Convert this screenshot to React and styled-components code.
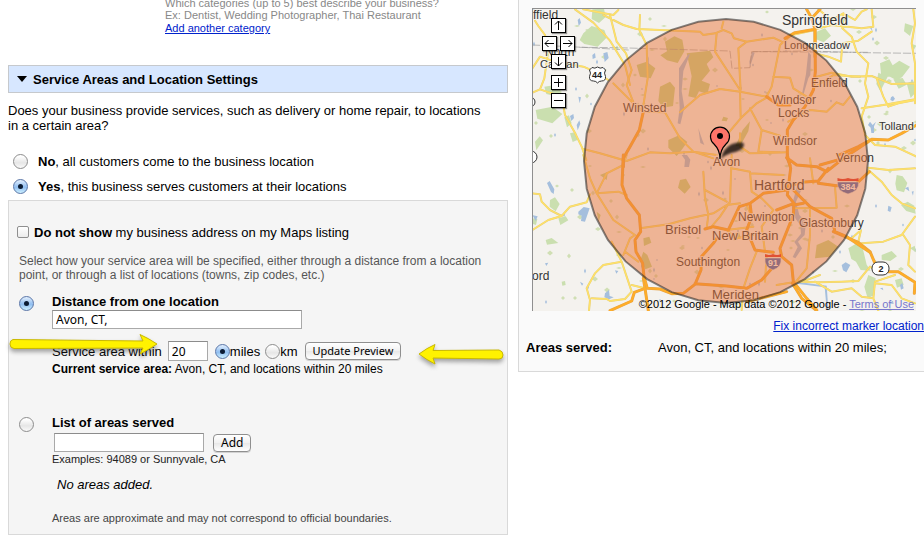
import React from "react";
import styled, { createGlobalStyle, css } from "styled-components";

const GlobalStyle = createGlobalStyle`
  * { box-sizing: border-box; }
  body {
    margin: 0;
    background: #fff;
    color: #000;
    font: 13px/15px "Liberation Sans", Arial, Helvetica, sans-serif;
    overflow: hidden;
  }
  a { color: #0022cc; }
  p, h2 { margin: 0; }
`;

const Page = styled.main`
  display: grid;
  grid-template-columns: minmax(0, 500fr) minmax(0, 406fr);
  gap: 10px;
  padding-left: 8px;
  align-items: start;
`;

const Form = styled.form``;

const CategoryHint = styled.div`
  margin: -3px 0 0 157px;
  padding-bottom: 29px;
  font-size: 11px;
  line-height: 12px;
  color: #888;
  a { display: inline-block; line-height: 15px; }
`;

const SectionHeader = styled.h2`
  display: flex;
  align-items: center;
  gap: 6px;
  height: 28px;
  padding: 0 8px;
  border: 1px solid #c6c9cd;
  background: #d7e7ff;
  font-size: 13px;
  line-height: 15px;
`;

const Question = styled.p`
  padding: 10px 16px 16px 0;
`;

const Choice = styled.label`
  display: flex;
  align-items: center;
  gap: 10px;
  height: 25px;
  padding-left: 5px;
`;

const Radio = styled.input.attrs({ type: "radio" })`
  appearance: none;
  flex: none;
  display: grid;
  place-items: center;
  width: 15px;
  height: 15px;
  margin: 0;
  border: 1px solid #8d8d8d;
  border-radius: 50%;
  background: linear-gradient(#fff 10%, #e6e6e6 60%, #fafafa);
  &:checked {
    border-color: #5a76a8;
    background: linear-gradient(#dcebfc 5%, #8fbdf0 55%, #cdf0ff);
  }
  &:checked::after {
    content: "";
    width: 5px;
    height: 5px;
    border-radius: 50%;
    background: #0b1b33;
  }
`;

const Checkbox = styled.input.attrs({ type: "checkbox" })`
  appearance: none;
  flex: none;
  width: 12px;
  height: 12px;
  margin: 0 0 2px;
  border: 1px solid #8f8f8f;
  border-radius: 2px;
  background: linear-gradient(#fff, #ececec);
`;

const Panel = styled.section`
  position: relative;
  display: flex;
  flex-direction: column;
  margin-top: 1px;
  padding: 24px 10px 8px;
  border: 1px solid #d9d9d9;
  background: #f5f5f5;
`;

const HideAddress = styled.label`
  display: flex;
  align-items: center;
  gap: 5px;
  margin-left: -2px;
`;

const Explanation = styled.p`
  padding: 14px 0 12px;
  font-size: 12px;
  line-height: 14px;
  color: #555;
`;

const Option = styled.div`
  display: grid;
  grid-template-columns: 33px minmax(0, 1fr);
  > ${Radio} { margin-top: 2px; }
`;

const OptionBody = styled.div`
  display: flex;
  flex-direction: column;
  align-items: flex-start;
`;

const OptionTitle = styled.label`
  line-height: 16px;
  font-weight: bold;
`;

const TextInput = styled.input.attrs({ type: "text" })`
  width: ${(p) => p.$width}px;
  height: ${(p) => (p.$tall ? 20 : 19)}px;
  margin: 0;
  padding: 0 3px;
  border: 1px solid #a9a9a9;
  border-top-color: #8c8c8c;
  background: #fff;
  color: #000;
  font: 12px "Noto Sans", "Open Sans", sans-serif;
`;

const DistanceRow = styled.div`
  display: flex;
  align-items: center;
  height: 20px;
  margin-top: 12px;
  > label:first-child { margin-right: 6px; }
`;

const UnitLabel = styled.label`
  display: flex;
  align-items: center;
  margin-left: ${(p) => (p.$first ? 7 : 5)}px;
`;

const Button = styled.button`
  height: 18px;
  margin: 0 0 0 ${(p) => p.$gap}px;
  padding: 0 7px;
  border: 1px solid #8f8f8f;
  border-radius: 4px;
  background: linear-gradient(#fff, #f1f1f1 50%, #e8e8e8 51%, #fff);
  box-shadow: 0 1px 0 #d2d2d2;
  color: #000;
  font: ${(p) => (p.$small ? 11 : 12)}px/16px "Noto Sans", "Open Sans", sans-serif;
`;

const CurrentArea = styled.p`
  padding: 1px 0 38px;
  font-size: 12px;
  line-height: 15px;
`;

const AddRow = styled.div`
  display: flex;
  align-items: center;
  padding: 2px 0 0 2px;
`;

const SmallNote = styled.p`
  font-size: 11px;
  line-height: 15px;
  color: ${(p) => (p.$muted ? "#444" : "#222")};
`;

const EmptyList = styled.p`
  padding: 10px 5px 19px;
  font-style: italic;
`;

const ArrowMark = styled.svg`
  position: absolute;
  top: ${(p) => p.$top}px;
  left: ${(p) => p.$left}px;
  filter: drop-shadow(0 3px 2px rgba(60, 60, 60, 0.45));
  pointer-events: none;
`;

const Preview = styled.aside`
  padding: 8px 0 16px;
  border: solid #d9d9d9;
  border-width: 0 0 1px 1px;
  background: #fafafa;
`;

const MapFrame = styled.div`
  position: relative;
  margin: 0 8px 0 13px;
  border: solid #8f8f8f;
  border-width: 1px 0 0 1px;
`;

const MapDrawing = styled.svg`
  display: block;
  width: 100%;
  height: auto;
  font-family: "Liberation Sans", Arial, sans-serif;
`;

const MapControls = styled.div`
  position: absolute;
  top: 9px;
  left: 9px;
  display: flex;
  flex-direction: column;
  align-items: center;
  gap: 3px;
`;

const ControlRow = styled.div`
  display: flex;
  gap: 3px;
  ${(p) => p.$apart && css`margin-top: 3px;`}
`;

const ControlButton = styled.button`
  display: grid;
  place-items: center;
  width: 15px;
  height: 15px;
  margin: 0;
  padding: 0;
  border: 1px solid #000;
  background: #fff;
  box-shadow: 1px 1px 1px rgba(0, 0, 0, 0.4);
`;

const Copyright = styled.div`
  position: absolute;
  right: 2px;
  bottom: 0;
  font-size: 11px;
  line-height: 14px;
  white-space: nowrap;
  a { color: #7777cc; }
`;

const MarkerFix = styled.div`
  padding-top: 8px;
  font-size: 12px;
  line-height: 14px;
  text-align: right;
`;

const AreasServed = styled.dl`
  display: grid;
  grid-template-columns: 132px 1fr;
  margin: 0;
  padding: 7px 0 0 7px;
  dt { font-weight: bold; }
  dd { margin: 0; }
`;

const controlPaths = {
  up: "M5.500 10V1M2 4.500L5.500 1L9 4.500",
  down: "M5.500 1V10M2 6.500L5.500 10L9 6.500",
  left: "M10 5.500H1M4.500 2L1 5.500L4.500 9",
  right: "M1 5.500H10M6.500 2L10 5.500L6.500 9",
  plus: "M1 5.500H10M5.500 1V10",
  minus: "M1 5.500H10",
};

function MapButton({ kind, label }) {
  return (
    <ControlButton type="button" aria-label={label}>
      <svg width="11" height="11" viewBox="0 0 11 11" fill="none" stroke="#000" strokeWidth="1">
        <path d={controlPaths[kind]} />
      </svg>
    </ControlButton>
  );
}

/* Map sheets: each is drawn at three times the map's scale and placed by its own origin. */
const sheets = [
  {
    at: [-18, -9],
    parks: [
      "M232 28l35-2 5 25-20 18-22-12z",
      "M205 100l25-22 38 12 8 22-28 28-40-8-14-12z",
      "M62 330l50-10 30 22-30 28-45-14z",
      "M148 352l14-6 8 24-14 12zM165 400l18-4 4 24-14 6z",
      "M88 260l28-4 22 12-10 22-34-8zM60 425l14-16 10 12-20 30z",
    ],
    water: ["M188 60l6-6 4 14-7 10zM232 165l8-6 2 14-9 4zM265 160l12-4 4 18-12 12zM262 205l7-2 2 14-8 0zM165 348l10-6 2 12-8 9zM185 375l8-14 3 10-8 20zM190 290l8 2-4 18z"],
    minor: [
      "M60 62L70 78L90 105L100 150L88 235L75 268L52 278",
      "M180 28L235 68L285 122L330 195L345 255",
      "M205 28L295 45L310 30",
      "M52 205L75 170L120 185L205 200L240 215L280 240",
      "M75 268L140 290L150 345L178 395L200 440L214 480",
    ],
    major: [],
    lines: ["M52 135L100 137L205 142L340 150"],
  },
  {
    at: [182, -9],
    parks: [
      "M305 95l25-10 18 22-22 20-25-10zM495 190l28-12 10 18 20-14 32 18-24 32-18 8-18-10-26 0z",
      "M490 218l28 12-22 44-12-22zM535 238l28-4 12 20-24 12zM570 70l25 8-10 30-18-14zM592 132l12 5-8 14z",
      "M575 250l20-8 8 34-16 18z",
    ],
    water: ["M465 365l8 10 10-10-6 14 0 20-8 0-2-16-8-8zM528 292l6-4 6 8-6 8-8-4zM385 55l10 4 4 12-8-3zM462 80l8 4 3 10z"],
    minor: [
      "M310 28L350 60L385 40L420 60L440 35L455 28",
      "M385 40L382 85L410 110L425 155L460 190L450 250L460 290L440 350L450 405L480 435L540 440L605 470",
      "M300 88L350 75L440 85L475 80L470 28",
      "M300 160L340 170L378 185L382 130L430 122L470 95",
      "M300 232L350 218L410 230L470 228L530 252L600 250",
      "M595 28L600 70L590 130L600 190L600 310",
      "M520 320L505 290L485 235M440 325L505 315L600 298M520 320L550 310L600 300",
    ],
    major: ["M275 28L290 55L300 88L300 170M300 88L240 98L210 115M290 55L315 28", "M370 466L430 440L470 418L520 420L560 400L605 375"],
    lines: ["M115 155L280 153L440 158L605 160"],
  },
  {
    at: [-18, 146],
    parks: ["M105 135l15-8 14 20-12 22-18-14zM130 190l22-6 8 12-24 14zM92 255l18-6 20 15-34 5zM140 380l10-2 2 12-10 2zM55 190l12 2-4 18-12-4z"],
    water: ["M96 84l8-6 14 25-2 14-8-6zM190 170l16-14 18 4-14 40-12-2 2-16-10-4zM52 180l16 4-6 14zM270 415l12-10 2 18 12 4-14 6-14-6zM300 346l10 2-6 8zM90 325l10-2-6 10zM195 380l10 6-4 6z"],
    minor: [
      "M52 115L75 118L80 140L105 165L140 183L165 155L215 142L225 118",
      "M52 225L100 195L140 183",
      "M222 467L225 435L215 400L240 355L265 330L320 320L350 410L330 432L285 438L275 432L230 430",
      "M290 260L320 320M350 390L390 400",
    ],
    major: ["M285 467L350 438L358 412L390 400L385 370", "M390 400L400 467"],
    lines: [],
  },
  {
    at: [182, 146],
    parks: [
      "M545 60l18 4 14 20-10 28-22-6-4-20zM558 150l20-10 20 12 4 24-28-8zM400 280l25-15 18 14 12 50 12 18-30-2-14-25-14-8z",
      "M500 300l30-12 16 16-20 14-26-4zM460 360l22 10-4 50-20 10-10-35zM540 375l20-5 6 20-20 8zM585 280l14-8 4 20z",
    ],
    water: ["M380 330l12-8 14 8-12 22-10-6zM570 100l10-5 3 14zM520 152l10 5-4 14-8-4zM555 390l7-6 4 16-8 4zM590 110l6-2-2 14zM495 400l8-2 2 8zM520 445l14-8 2 10z"],
    minor: [
      "M460 38L520 45L600 40M460 45L500 80L530 120L560 145L600 160",
      "M410 250L438 225L430 260M440 265L505 260L560 240L600 185",
      "M565 240L585 270L580 330L600 350",
      "M480 380L540 360M250 380L310 382L380 380L430 378L465 335L480 345M480 380L475 430L490 467M480 385L530 390L560 430L600 445",
      "M300 380L350 410L410 400L440 425L475 430",
    ],
    major: ["M355 230L430 262L465 290L480 325L520 350L550 350L600 382M600 382L598 415", "M232 385L260 430L305 467"],
    lines: [],
  },
  {
    at: [47, 6],
    parks: [
      "M255 80l28-16 24 10 6 35-20 35-32-8-20-15 20-12zM170 150l30-10 26 20-14 30-32-5zM320 115l70-8 10 20-20 20 10 20-25 30 25 10-8 30-25-8-10 20-22-5 10-60z",
      "M240 215l30-15 15 18-6 55-30 5-14-20zM265 375l32-14 25 20-20 28-12 14-25-25zM430 305l14 4-4 10-15-2zM488 345l22-26-5 30-25 45-14 0z",
    ],
    water: ["M325 118l5 0-20 50-5 60 8 50-12 50-8-3 6-45-2-40 0-80zM200 110l6 20 0 25-8-10zM685 110l8 10-2 60-6 10-15 50-4-3 12-60zM355 340l12 35 6 15-12-6zM508 140l8-30 8 3-10 30-4 15z"],
    minor: [
      "M90 0L110 80L138 115L155 165L140 210L165 275M180 0L178 45L200 90L203 190L187 290",
      "M100 205L155 260L190 290L255 292L300 370L340 410L400 430",
      "M70 0L130 30L170 42L360 50L370 60L405 55L430 45L455 55L462 70L500 80L580 68L605 80",
      "M430 20L425 40M410 55L405 110L480 225L482 310L440 360",
      "M500 80L475 100L482 225M300 292L360 240L420 222L480 230L560 245L575 215L600 90L635 60L705 45",
      "M10 402L60 415L140 438L210 412L270 415L340 410L410 420",
      "M482 310L530 265L565 245M510 280L545 345L600 362M545 345L535 410L600 412M580 185L630 188L640 220L680 245M625 320L690 285L740 290L770 262L790 270L810 245M700 220L760 180L840 185",
      "M480 355L480 395L510 415L620 412",
    ],
    major: ["M190 290L178 345L150 395L130 430L130 455", "M705 45L706 170L700 225L675 275L640 315L622 345L622 430L630 450", "M560 245L595 270L630 270", "M720 450L790 430L865 380"],
    lines: ["M0 97L110 98L450 108L456 160L510 158L515 110L870 112"],
  },
  {
    at: [47, 146],
    parks: ["M300 75l18-4 14 25-18 20-20-18zM190 250l18-5 6 18-22 10zM190 290l12 10 14 35-20 8-14-30zM710 270l35-15 30 20-25 30-45 5zM455 240l22-10 5 18-20 10zM60 60l24-10-4 25zM50 170l12 10-6 20zM550 180l22 5-8 15z"],
    water: ["M305 0l16 0 10 14-4 22-14 0 2-22zM652 90l12 15-16 35 10 40 20 20-4 40-20 20 12 20-20 30-8-4 15-30-10-15 20-25-2-25-18-25-8-32zM650 380l90 12 5 70-5 0-6-65-84-11z"],
    minor: [
      "M10 0L30 70L50 115L100 195L165 240M50 115L80 55L130 30M50 115L115 110L140 120M180 220L265 208L330 190L400 175L440 150L480 145",
      "M370 50L375 130L385 180L380 220M455 0L450 140L420 185L390 220M375 105L440 140M455 40L510 50L515 110L545 130",
      "M510 55L610 60M545 130L580 165L545 215L555 290M440 225L520 215M500 150L515 185M440 225L470 250L520 240",
      "M530 290L510 340L490 400L485 465M560 300L555 380M690 160L690 240L680 340L640 390M640 160L770 158L765 95M700 85L690 10",
      "M590 390L680 375L720 360M130 30L140 0M130 300L150 250L165 240M175 320L135 290",
    ],
    major: [
      "M130 0L126 90L140 130L178 180L182 230L165 255L168 290L188 325L192 365L202 400",
      "M202 400L240 402L275 416L310 415L345 388L363 345L364 305L400 265L410 250M375 222L400 215L445 225L478 155L510 145L550 115L620 105",
      "M345 386L440 393L500 400L545 375L580 335M500 440L620 410",
      "M622 0L632 40L622 120L642 145L640 180L600 280L605 305L635 330L640 380L680 430L710 465",
      "M620 8L650 30L710 35L740 50L790 10M620 95L665 82L715 78L745 40M715 85L770 92L830 85L868 50",
      "M640 105L690 155L755 190L765 230L800 245L870 292",
      "M510 145L515 185L500 225L525 285L580 292M642 145L590 165M670 145L642 150",
    ],
    lines: [],
  },
];

const townLabels = [
  ["ffield", 0, 10, 12], ["North", 12, 47, 12], ["Canaan", 7, 59, 11], ["ord", -1, 271, 12],
  ["Springfield", 249, 16, 14], ["Longmeadow", 251, 40, 11], ["Enfield", 278, 78, 12],
  ["Windsor", 239, 95, 12], ["Locks", 245, 108, 12], ["Windsor", 240, 136, 12],
  ["Vernon", 303, 153, 12], ["Tolland", 346, 121, 11], ["Winsted", 90, 103, 12],
  ["Avon", 180, 157, 12], ["Hartford", 221, 181, 14], ["Newington", 205, 212, 12],
  ["Glastonbury", 266, 218, 12], ["New Britain", 179, 231, 13], ["Bristol", 132, 225, 13],
  ["Southington", 143, 257, 12], ["Meriden", 179, 290, 13],
];

/* Small ponds and woods spread over the whole sheet by a fixed sequence. */
const speckles = Array.from({ length: 190 }, (_, i) => {
  const x = (i * 97 + ((i * i) % 53) * 3) % 384;
  const y = (i * 61 + ((i * i) % 37) * 5) % 303;
  const w = 1 + (i % 3);
  const h = 2 + (i % 4);
  return { x, y, w, h, water: i % 3 === 0 };
});

const SEGMENTS = 32;
const areaOutline = Array.from({ length: SEGMENTS }, (_, i) => {
  const angle = (i / SEGMENTS) * Math.PI * 2;
  return `${193 + 142 * Math.sin(angle)},${152 - 142 * Math.cos(angle)}`;
}).join(" ");

function Interstate({ x, y, number, width }) {
  const half = width / 2;
  return (
    <g transform={`translate(${x} ${y})`}>
      <path d={`M${-half} -3Q${-half - 1} 6 0 9Q${half + 1} 6 ${half} -3Z`} fill="#3f63b8" stroke="#e8e4e0" strokeWidth=".6" />
      <path d={`M${-half} -7Q${-half / 2} -5 0 -7Q${half / 2} -5 ${half} -7V-4H${-half}Z`} fill="#d92d2d" />
      <text y="5" textAnchor="middle" fontSize="9" fontWeight="bold" fill="#fff">{number}</text>
    </g>
  );
}

function AreaMap() {
  return (
    <MapDrawing viewBox="0 0 383 302" role="img" aria-label="Map of the area within 20 miles of Avon, CT">
      <rect width="383" height="302" fill="#f4f2ee" />
      {speckles.map((s, i) => (
        <path key={i} d={`M${s.x} ${s.y}l${s.w} ${-s.h / 2} ${s.w} ${s.h / 2} ${-s.w} ${s.h / 2}z`} fill={s.water ? "#a5bfdd" : "#d0dfb4"} />
      ))}
      {sheets.map((s, i) => (
        <g key={i} transform={`translate(${s.at[0]} ${s.at[1]}) scale(.33333)`} strokeLinejoin="round" fill="none">
          <path d={s.parks.join("")} fill={i === 4 || i === 5 ? "#c3d58a" : "#cadfaf"} />
          <path d={s.water.join("")} fill="#a5bfdd" />
        </g>
      ))}
      {["lines", "minor", "major"].map((kind) => (
        <g key={kind}>
          {sheets.map((s, i) => (
            <g key={i} transform={`translate(${s.at[0]} ${s.at[1]}) scale(.33333)`} strokeLinejoin="round" strokeLinecap="round" fill="none">
              {kind === "lines" && <path d={s.lines.join("")} stroke="#999" strokeWidth="2" strokeDasharray="22 8" />}
              {kind === "minor" && <path d={s.minor.join("")} stroke="#e5cd75" strokeWidth="6" />}
              {kind === "minor" && <path d={s.minor.join("")} stroke="#ffe168" strokeWidth="4" />}
              {kind === "major" && <path d={s.major.join("")} stroke="#e5a348" strokeWidth="9" />}
              {kind === "major" && <path d={s.major.join("")} stroke="#ffad27" strokeWidth="6" />}
            </g>
          ))}
        </g>
      ))}
      <g fill="#fff" stroke="#333">
        <path d="M59 58.500Q62 60 64.500 58Q67 60 70 58.500L72.500 61Q70.500 64 72.500 67.500Q73 72 68.500 72Q66 72 64.500 74Q63 72 60.500 72Q56 72 56.500 67.500Q58.500 64 56.500 61Z" />
        <rect x="339" y="253" width="17" height="13" rx="6" />
        <circle cx="-3" cy="93" r="5" />
        <circle cx="-2" cy="148" r="6" />
      </g>
      <g fontSize="9" fontWeight="bold" textAnchor="middle" fill="#222">
        <text x="64" y="69">44</text>
        <text x="348" y="263">2</text>
      </g>
      <Interstate x={315} y={176} number="384" width={21} />
      <Interstate x={240} y={252} number="91" width={16} />
      <g fill="#333" stroke="#f7f5f0" strokeWidth="2" strokeOpacity=".8" paintOrder="stroke">
        {townLabels.map(([name, x, y, size]) => (
          <text key={`${name}${y}`} x={x} y={y} fontSize={size}>{name}</text>
        ))}
      </g>
      <polygon points={areaOutline} fill="#e8763b" fillOpacity=".5" stroke="#222" strokeOpacity=".55" strokeWidth="2" />
      <defs>
        <filter id="soft" x="-30%" y="-30%" width="160%" height="160%"><feGaussianBlur stdDeviation="1" /></filter>
      </defs>
      <path d="M188 150Q190 139 199 135Q211 131 211 136Q210 142 198 144Q192 146 188 150Z" fill="#000" fillOpacity=".75" filter="url(#soft)" />
      <path d="M187 150Q187 141 181 135A9.500 9.500 0 1 1 193 135Q187 141 187 150Z" fill="#fe7569" stroke="#000" strokeWidth="1.200" />
      <circle cx="187" cy="127" r="3" fill="#000" />
    </MapDrawing>
  );
}

export default function App() {
  return (
    <>
      <GlobalStyle />
      <Page>
        <Form onSubmit={(e) => e.preventDefault()}>
          <CategoryHint>
            <div>Which categories (up to 5) best describe your business?</div>
            <div>Ex: Dentist, Wedding Photographer, Thai Restaurant</div>
            <a href="#category">Add another category</a>
          </CategoryHint>
          <SectionHeader>
            <svg width="10" height="6" viewBox="0 0 10 6" aria-hidden="true"><path d="M0 0H10L5 6Z" /></svg>
            Service Areas and Location Settings
          </SectionHeader>
          <Question>
            Does your business provide services, such as delivery or home repair, to locations in a certain area?
          </Question>
          <Choice><Radio name="serves" /><span><b>No</b>, all customers come to the business location</span></Choice>
          <Choice><Radio name="serves" defaultChecked /><span><b>Yes</b>, this business serves customers at their locations</span></Choice>
          <Panel>
            <HideAddress><Checkbox /><span><b>Do not show</b> my business address on my Maps listing</span></HideAddress>
            <Explanation>
              Select how your service area will be specified, either through a distance from a location point, or through a list of locations (towns, zip codes, etc.)
            </Explanation>
            <Option>
              <Radio id="by-distance" name="method" defaultChecked />
              <OptionBody>
                <OptionTitle htmlFor="by-distance">Distance from one location</OptionTitle>
                <TextInput $width={250} aria-label="Location" defaultValue="Avon, CT," />
                <DistanceRow>
                  <label htmlFor="within">Service area within</label>
                  <TextInput id="within" $width={40} $tall defaultValue="20" />
                  <UnitLabel $first><Radio name="unit" defaultChecked />miles</UnitLabel>
                  <UnitLabel><Radio name="unit" />km</UnitLabel>
                  <Button type="button" $gap={7} $small>Update Preview</Button>
                </DistanceRow>
                <CurrentArea><b>Current service area:</b> Avon, CT, and locations within 20 miles</CurrentArea>
              </OptionBody>
            </Option>
            <Option>
              <Radio id="by-list" name="method" />
              <OptionBody>
                <OptionTitle htmlFor="by-list">List of areas served</OptionTitle>
                <AddRow>
                  <TextInput $width={150} aria-label="Area to add" />
                  <Button type="button" $gap={9}>Add</Button>
                </AddRow>
                <SmallNote>Examples: 94089 or Sunnyvale, CA</SmallNote>
                <EmptyList>No areas added.</EmptyList>
                <SmallNote $muted>Areas are approximate and may not correspond to official boundaries.</SmallNote>
              </OptionBody>
            </Option>
            <ArrowMark $top={132} $left={0} width="149" height="23" viewBox="0 0 149 23" aria-hidden="true">
              <path d="M4 6.500L134 8L131 1.500Q139 5 148 11Q139 17 131 21L134 15L5 15.500Q1 15 1 11Q1 7 4 6.500Z" fill="#fff200" stroke="#c9b800" />
            </ArrowMark>
            <ArrowMark $top={142} $left={409} width="87" height="23" viewBox="0 0 87 23" aria-hidden="true">
              <path d="M1 11Q9 5 17 1.500L15 7.500L81 7Q85 8 85 12Q85 16 81 16L15 15L17 21Q9 17 1 11Z" fill="#fff200" stroke="#c9b800" />
            </ArrowMark>
          </Panel>
        </Form>
        <Preview>
          <MapFrame>
            <AreaMap />
            <MapControls>
              <ControlRow><MapButton kind="up" label="Pan up" /></ControlRow>
              <ControlRow>
                <MapButton kind="left" label="Pan left" />
                <MapButton kind="right" label="Pan right" />
              </ControlRow>
              <ControlRow><MapButton kind="down" label="Pan down" /></ControlRow>
              <ControlRow $apart><MapButton kind="plus" label="Zoom in" /></ControlRow>
              <ControlRow><MapButton kind="minus" label="Zoom out" /></ControlRow>
            </MapControls>
            <Copyright>©2012 Google - Map data ©2012 Google - <a href="#terms">Terms of Use</a></Copyright>
          </MapFrame>
          <MarkerFix><a href="#marker">Fix incorrect marker location</a></MarkerFix>
          <AreasServed>
            <dt>Areas served:</dt>
            <dd>Avon, CT, and locations within 20 miles;</dd>
          </AreasServed>
        </Preview>
      </Page>
    </>
  );
}
